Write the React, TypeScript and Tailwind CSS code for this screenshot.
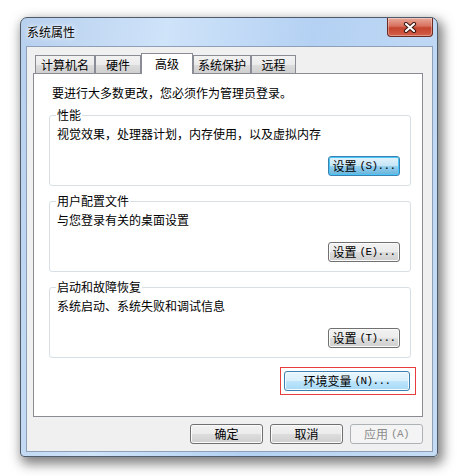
import React from "react";

const btnBase =
  "h-[20px] rounded-[3px] border text-[12px] leading-none flex items-center justify-center";
const btnNormal = `${btnBase} text-black border-[#707070] bg-[linear-gradient(#f2f2f2_0%,#ebebeb_50%,#dddddd_50%,#cfcfcf_100%)] shadow-[inset_0_0_0_1px_#fbfbfb]`;
const btnFocus = `${btnBase} text-black border-[#3c7fb1] bg-[linear-gradient(#e5f4fc_0%,#c4e5f6_50%,#98d1ef_50%,#68b3db_100%)] shadow-[inset_0_0_0_1px_#48c8f8]`;
const btnHover = `${btnBase} text-black border-[#3c7fb1] bg-[linear-gradient(#eaf6fd_0%,#d9f0fc_50%,#bee6fd_50%,#a7d9f5_100%)] shadow-[inset_0_0_0_1px_#f4fbff]`;
const btnDisabled = `${btnBase} text-[#8c8c8c] border-[#adb2b5] bg-[#f4f4f4]`;

const tabIdle =
  "h-[18px] border border-b-0 border-[#898c95] bg-[linear-gradient(#f2f2f2_0%,#ebebeb_50%,#dddddd_50%,#cfcfcf_100%)] flex items-center justify-center text-[12px] leading-none";

// CJK part + half-width accelerator part, like "设置(S)..."
function Label({ text, keyPart }: { text: string; keyPart: string }) {
  return (
    <span className="flex items-center">
      {text}
      <span className="ml-[3px] font-['Liberation_Mono',monospace] text-[11px] tracking-[-0.6px]">
        {keyPart}
      </span>
    </span>
  );
}

function Group({
  title,
  desc,
  text,
  keyPart,
  focused,
}: {
  title: string;
  desc: string;
  text: string;
  keyPart: string;
  focused?: boolean;
}) {
  return (
    <fieldset className="rounded-[3px] border border-[#d5dfe5] pl-[6px] pr-[10px] pb-[9px]">
      <legend className="h-[14px] px-[1px] text-[12px] leading-[14px]">{title}</legend>
      <div className="mt-[5px] ml-[1px] h-[14px] text-[12px] leading-[14px]">{desc}</div>
      <div className="mt-[15px] flex justify-end">
        <button className={`${focused ? btnFocus : btnNormal} w-[72px]`}>
          <Label text={text} keyPart={keyPart} />
        </button>
      </div>
    </fieldset>
  );
}

export default function App() {
  return (
    <div className="w-[463px] h-[476px] bg-white pt-[17px] pl-[20px] font-['Noto_Sans_CJK_SC','Liberation_Sans',sans-serif] text-black">
      {/* window */}
      <div className="w-[418px] h-[440px] rounded-t-[7px] rounded-b-[4px] border border-[#4f5b6b] bg-[linear-gradient(100deg,#b7d0ee_0%,#cfe3f9_30%,#b4d1f3_60%,#c6dcf5_100%)] shadow-[3px_5px_12px_2px_rgba(0,0,0,0.5)] flex flex-col">
        {/* title bar */}
        <div className="h-[28px] flex justify-between">
          <div className="pl-[6px] flex items-center text-[12px] [text-shadow:0_0_6px_#fff,0_0_3px_#fff]">
            系统属性
          </div>
          <div className="mr-[4px] w-[46px] h-[19px] rounded-b-[4px] border border-t-0 border-[#6b2a22] bg-[linear-gradient(#e9a99a_0%,#d8705e_45%,#c4442f_55%,#d2604a_100%)] shadow-[inset_0_0_0_1px_rgba(255,255,255,0.35)] flex items-center justify-center">
            <svg width="14" height="11" viewBox="0 0 14 11">
              <path d="M3 2 L11 9 M11 2 L3 9" stroke="#3b1410" strokeWidth="4.2" strokeLinecap="round" />
              <path d="M3 2 L11 9 M11 2 L3 9" stroke="#ffffff" strokeWidth="2.2" strokeLinecap="round" />
            </svg>
          </div>
        </div>

        {/* client area */}
        <div className="ml-[5px] mr-[4px] h-[406px] border border-[#8da0b8] bg-[#f0f0f0] pt-[6px] pl-[6px] pr-[9px] flex flex-col">
          {/* tabs */}
          <div className="ml-[2px] h-[20px] flex items-end">
            <div className={`${tabIdle} w-[60px]`}>计算机名</div>
            <div className={`${tabIdle} w-[46px]`}>硬件</div>
            <div className="relative z-10 -mb-[1px] h-[21px] w-[52px] border border-b-0 border-[#898c95] bg-white flex justify-center pt-[3px] text-[12px] leading-[14px]">
              高级
            </div>
            <div className={`${tabIdle} w-[58px]`}>系统保护</div>
            <div className={`${tabIdle} w-[45px]`}>远程</div>
          </div>

          {/* panel */}
          <div className="w-[390px] h-[344px] border border-[#898c95] bg-white pt-[12px] pl-[15px] pr-[11px] flex flex-col">
            <div className="ml-[3px] h-[14px] text-[12px] leading-[14px]">
              要进行大多数更改，您必须作为管理员登录。
            </div>
            <div className="mt-[8px] flex flex-col gap-[8px]">
              <Group
                title="性能"
                desc="视觉效果，处理器计划，内存使用，以及虚拟内存"
                text="设置"
                keyPart="(S)..."
                focused
              />
              <Group title="用户配置文件" desc="与您登录有关的桌面设置" text="设置" keyPart="(E)..." />
              <Group title="启动和故障恢复" desc="系统启动、系统失败和调试信息" text="设置" keyPart="(T)..." />
            </div>
            <div className="mt-[9px] self-end -mr-[5px] border border-[#e83b3b] py-[3px] pl-[3px] pr-[5px]">
              <button className={`${btnHover} w-[126px]`}>
                <Label text="环境变量" keyPart="(N)..." />
              </button>
            </div>
          </div>

          {/* dialog buttons */}
          <div className="mt-[7px] w-[390px] flex justify-end gap-[7px]">
            <button className={`${btnNormal} w-[73px]`}>确定</button>
            <button className={`${btnNormal} w-[73px]`}>取消</button>
            <button className={`${btnDisabled} w-[73px]`}>
              <Label text="应用" keyPart="(A)" />
            </button>
          </div>
        </div>
      </div>
    </div>
  );
}
